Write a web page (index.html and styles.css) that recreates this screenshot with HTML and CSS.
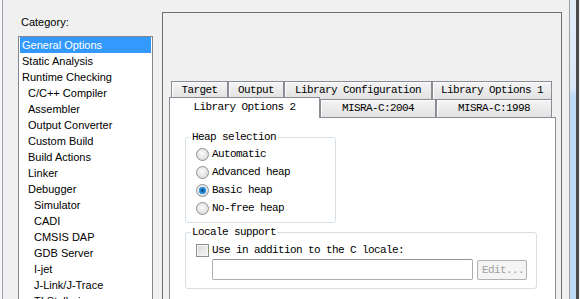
FILE: index.html
```html
<!DOCTYPE html>
<html lang="en">
<head>
    <meta charset="UTF-8">
    <title>Options</title>
    <link rel="stylesheet" href="styles.css">
</head>
<body>
    <div class="edge-left"></div>

    <div class="category-pane">
        <div class="category-label">Category:</div>
        <div class="category-list">
            <div class="item selected">General Options</div>
            <div class="item">Static Analysis</div>
            <div class="item">Runtime Checking</div>
            <div class="item sub">C/C++ Compiler</div>
            <div class="item sub">Assembler</div>
            <div class="item sub">Output Converter</div>
            <div class="item sub">Custom Build</div>
            <div class="item sub">Build Actions</div>
            <div class="item sub">Linker</div>
            <div class="item sub">Debugger</div>
            <div class="item subsub">Simulator</div>
            <div class="item subsub">CADI</div>
            <div class="item subsub">CMSIS DAP</div>
            <div class="item subsub">GDB Server</div>
            <div class="item subsub">I-jet</div>
            <div class="item subsub">J-Link/J-Trace</div>
            <div class="item subsub">TI Stellaris</div>
        </div>
    </div>

    <div class="options-box">
        <div class="tab-control">
            <div class="tab-row back">
                <div class="tab w-target">Target</div>
                <div class="tab w-output">Output</div>
                <div class="tab w-libconf">Library Configuration</div>
                <div class="tab w-libopt1">Library Options 1</div>
            </div>
            <div class="tab-row front">
                <div class="tab active w-libopt2">Library Options 2</div>
                <div class="tab w-misra">MISRA-C:2004</div>
                <div class="tab w-misra">MISRA-C:1998</div>
            </div>
            <div class="tab-page">
                <fieldset class="group heap">
                    <legend>Heap selection</legend>
                    <label class="choice"><span class="radio"></span>Automatic</label>
                    <label class="choice"><span class="radio"></span>Advanced heap</label>
                    <label class="choice"><span class="radio checked"></span>Basic heap</label>
                    <label class="choice"><span class="radio"></span>No-free heap</label>
                </fieldset>

                <fieldset class="group locale">
                    <legend>Locale support</legend>
                    <label class="choice check-row"><span class="checkbox"></span>Use in addition to the C locale:</label>
                    <div class="locale-row">
                        <div class="text-field"></div>
                        <div class="btn disabled">Edit...</div>
                    </div>
                </fieldset>
            </div>
        </div>
    </div>

    <div class="edge-right"></div>
</body>
</html>
```

FILE: styles.css
```css
* {
    margin: 0;
    padding: 0;
    box-sizing: border-box;
}

body {
    display: flex;
    width: 580px;
    height: 299px;
    overflow: hidden;
    background-color: #f0f0f0;
    font-family: "Liberation Sans", Arial, sans-serif;
    font-size: 11px;
    color: #000;
}

.edge-left {
    flex: none;
    width: 3px;
    background-color: #f7f7f7;
    border-right: 1px solid #9ba4b0;
}

/* category list on the left */
.category-pane {
    flex: none;
    padding-left: 15px;
}

.category-label {
    margin-top: 15px;
    margin-left: 3px;
    height: 21px;
    line-height: 14px;
}

.category-list {
    width: 135px;
    height: 300px;
    padding: 0 1px;
    background-color: #fff;
    border: 1px solid #828790;
}

.item {
    height: 16px;
    line-height: 16px;
    padding-left: 2px;
    white-space: nowrap;
}

.item.sub {
    padding-left: 8px;
}

.item.subsub {
    padding-left: 14px;
}

.item.selected {
    background-color: #3399ff;
    color: #fff;
}

/* options box with tabs */
.options-box {
    flex: none;
    width: 400px;
    height: 300px;
    margin-top: 12px;
    margin-left: 9px;
    padding: 68px 0 0 6px;
    border: 1px solid #6e6e6e;
}

.tab-control {
    width: 387px;
    font-family: "Liberation Mono", "Courier New", monospace;
    font-size: 11px;
    letter-spacing: -0.6px;
}

.tab-row {
    display: flex;
    height: 18px;
}

.tab-row.back {
    margin-left: 2px;
}

.tab {
    flex: none;
    height: 18px;
    line-height: 17px;
    text-align: center;
    white-space: nowrap;
    border: 1px solid #898c95;
    border-bottom: none;
    background: linear-gradient(#f4f4f4, #e2e2e2);
    box-shadow: inset 1px 1px 0 #fdfdfd;
}

.tab.active {
    position: relative;
    z-index: 1;
    height: 21px;
    margin-top: -2px;
    line-height: 19px;
    background: #fff;
    box-shadow: none;
}

.w-target { width: 57px; }
.w-output { width: 56px; }
.w-libconf { width: 148px; }
.w-libopt1 { width: 120px; }
.w-libopt2 { width: 151px; }
.w-misra { width: 116px; }

.tab-page {
    height: 200px;
    padding: 13px 0 0 15px;
    background-color: #fff;
    border: 1px solid #898c95;
}

/* group boxes */
.group {
    margin: 0;
    padding: 0 0 5px 5px;
    border: 1px solid #d5dfe5;
    border-radius: 3px;
}

.group legend {
    padding: 0 1px;
    line-height: 12px;
}

.group.heap {
    width: 151px;
    padding-top: 2px;
}

.group.locale {
    width: 352px;
    margin-top: 3px;
    padding-top: 3px;
    padding-bottom: 8px;
}

.choice {
    display: flex;
    align-items: center;
    gap: 3px;
    height: 18px;
    padding-left: 5px;
    white-space: nowrap;
}

.radio {
    flex: none;
    width: 13px;
    height: 13px;
    border-radius: 50%;
    border: 1px solid #8e9092;
    background: radial-gradient(circle at 45% 40%, #fbfbfb 0, #e4e4e4 55%, #cfcfcf 100%);
}

.radio.checked {
    background:
        radial-gradient(circle at 50% 50%, #0c3e72 0, #1a6fb8 1.5px, #3fa3e6 3.5px, rgba(63, 163, 230, 0) 4px),
        radial-gradient(circle at 45% 40%, #fbfbfb 0, #e4e4e4 55%, #cfcfcf 100%);
}

.checkbox {
    flex: none;
    width: 13px;
    height: 13px;
    border: 1px solid #8e8f8f;
    background: linear-gradient(135deg, #d8d8d8, #f6f6f6);
    box-shadow: inset 0 0 0 1px #f4f4f4;
}

.locale-row {
    display: flex;
    align-items: center;
    gap: 4px;
    margin-left: 21px;
}

.text-field {
    width: 261px;
    height: 21px;
    background-color: #fff;
    border: 1px solid #abadb3;
    border-top-color: #8e939b;
    border-radius: 2px;
}

.btn {
    width: 50px;
    height: 20px;
    line-height: 18px;
    padding-left: 4px;
    border: 1px solid #adb2b5;
    border-radius: 2px;
    background-color: #f4f4f4;
}

.btn.disabled {
    color: #a0a0a0;
}

/* window frame on the right */
.edge-right {
    flex: none;
    width: 10px;
    margin-left: 7px;
    border-left: 1px solid #9d9d9d;
    border-right: 3px solid #4c4c4c;
    background: linear-gradient(#e2edf9 0, #dae8f8 88px, #bcd9f6 96px, #bcd9f6 100%);
}
```
